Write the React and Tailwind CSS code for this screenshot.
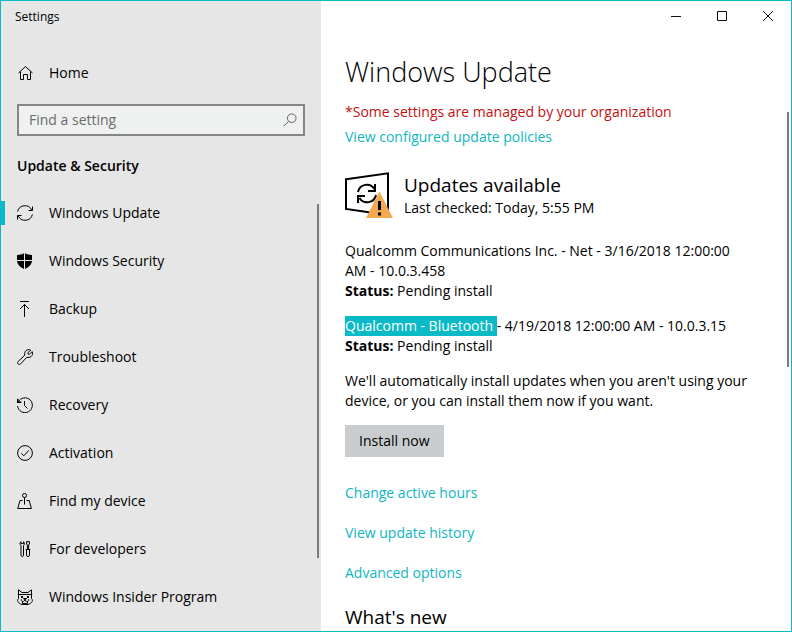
import React from "react";

function Icon({ children, className = "size-4", box = "0 0 16 16" }) {
  return (
    <svg viewBox={box} className={className} fill="none" stroke="currentColor" strokeWidth="1" aria-hidden="true">
      {children}
    </svg>
  );
}

const icons = {
  home: (
    <Icon>
      <path d="M1.5 8 8.5 1.5 15.5 8M3.5 6.5V14.5H6.5V9.5H10.5V14.5H13.5V6.5" />
    </Icon>
  ),
  sync: (
    <Icon>
      <path d="M.6 6.6A7.5 7.5 0 0 1 14.8 5.2M15.4 9.4A7.5 7.5 0 0 1 1.2 10.8" />
      <path d="M15.5 1.5V5.5H11.5M.5 14.5V10.5H4.5" />
    </Icon>
  ),
  shield: (
    <Icon>
      <path
        d="M7.5 0C5.5 1.2 3.2 1.9 0 2V7H7V.3ZM8 .3V7H15V2C12.2 1.9 9.8 1.5 8 .3ZM0 8C.4 11.6 3.4 14.4 7 16V8ZM8 16C11.6 14.4 14.6 11.6 15 8H8Z"
        fill="currentColor"
        stroke="none"
      />
    </Icon>
  ),
  backup: (
    <Icon>
      <path d="M3 .5H12M7.5 16V3.5M3 8 7.5 3.5 12 8" />
    </Icon>
  ),
  wrench: (
    <Icon>
      <path d="M13.6 1.1 10.9 3.8 11.1 5.1 12.4 5.3 15.1 2.6C16 4.6 15.4 6.6 14 7.6 12.8 8.5 11.2 8.7 9.9 8.2L3.6 14.9C2.9 15.7 1.8 15.7 1.1 15 .4 14.2.4 13.1 1.2 12.4L7.9 6.1C7.3 4.4 7.7 2.8 8.9 1.7 10.2.5 12 .3 13.6 1.1Z" />
    </Icon>
  ),
  recovery: (
    <Icon>
      <path d="M1.3 5A7.4 7.4 0 1 1 .6 9M7.5 4V8.5L10.5 11.5" />
      <path d="M.8 1.8V5.2H4.4" strokeWidth="1.5" />
    </Icon>
  ),
  activation: (
    <Icon>
      <circle cx="8" cy="8" r="7.4" />
      <path d="M4.3 8.3 6.8 10.8 11.8 5.4" />
    </Icon>
  ),
  find: (
    <Icon>
      <circle cx="7.5" cy="2.5" r="2" />
      <path d="M7.5 4.5V11.5M5.5 7.5H3L.7 15.5H14.4L12.2 7.5H9.5" />
    </Icon>
  ),
  developers: (
    <Icon>
      <path d="M4 .7C2.8 1.3 2.6 3.6 4 4.6V14.2C4 15.9 6.5 15.9 6.5 14.2V4.6C7.8 3.6 7.6 1.3 6.5.7V2.6H4ZM9.6.6H12.4V3L11.6 4V8.5H10.4V4L9.6 3ZM9.5 8.5H12.5V14.3C12.5 15.9 9.5 15.9 9.5 14.3ZM8.7 8.5H13.3" />
    </Icon>
  ),
  insider: (
    <Icon>
      <path d="M1.5 5.5V.8L5 3.5H11L14.5.8V5.5M.8 5.5H15.2M1.5 5.5V9.5M14.5 5.5V9.5" />
      <path d="M1.5 9.5C.3 10.5.3 12.4 1.5 13.3 2.6 15 4.6 15.5 6 15.5H10C11.4 15.5 13.4 15 14.5 13.3 15.7 12.4 15.7 10.5 14.5 9.5" />
      <path d="M6.5 9.5H9.5L8 11.3ZM8 11C7.6 12.3 6.6 12.6 5.6 12.4 4.4 12.1 4 11.2 4.4 10.2M8 11C8.4 12.3 9.4 12.6 10.4 12.4 11.6 12.1 12 11.2 11.6 10.2M5.5 12.5V14.5H10.5V12.5" />
      <path d="M4 7H6V9H4ZM10 7H12V9H10Z" fill="currentColor" stroke="none" />
    </Icon>
  ),
};

const navItems = [
  { icon: "sync", label: "Windows Update", current: true },
  { icon: "shield", label: "Windows Security" },
  { icon: "backup", label: "Backup" },
  { icon: "wrench", label: "Troubleshoot" },
  { icon: "recovery", label: "Recovery" },
  { icon: "activation", label: "Activation" },
  { icon: "find", label: "Find my device" },
  { icon: "developers", label: "For developers" },
  { icon: "insider", label: "Windows Insider Program" },
];

function NavLink({ icon, label, current }) {
  return (
    <a href="#" aria-current={current ? "page" : undefined} className="flex h-12 items-center">
      <span className={current ? "-ml-px h-6 w-[5px] bg-[#0bbac7]" : "-ml-px h-6 w-[5px]"} />
      <span className="ml-3 flex items-center gap-4">
        {icons[icon]}
        <span>{label}</span>
      </span>
    </a>
  );
}

function Sidebar() {
  return (
    <aside className="relative w-80 shrink-0 bg-[#e6e6e6]">
      <div className="flex h-8 items-center px-3.5 text-xs">Settings</div>
      <div className="mt-4">
        <NavLink icon="home" label="Home" />
      </div>
      <div className="mx-4 mt-[7px] flex h-8 items-center border-2 border-[#858585] bg-[#eff1f0] px-2.5 text-[#666]">
        <input
          type="text"
          aria-label="Find a setting"
          placeholder="Find a setting"
          className="min-w-0 flex-1 bg-transparent outline-none placeholder:text-[#6b6b6b]"
        />
        <Icon className="-mr-1 size-3.5" box="0 0 14 14">
          <circle cx="8.7" cy="5.2" r="4.3" />
          <path d="M5.6 8.3.6 13.3" />
        </Icon>
      </div>
      <h2 className="mt-4 h-7 px-4 leading-7 font-semibold">Update &amp; Security</h2>
      <nav className="mt-[9px]">
        {navItems.map((item) => (
          <NavLink key={item.label} {...item} />
        ))}
      </nav>
      <div className="absolute top-[203px] right-0.5 h-[354px] w-0.5 bg-[#7c7c7c]" />
    </aside>
  );
}

function WindowControls() {
  const cell = "flex h-[30px] w-[46px] items-center justify-center";
  return (
    <div className="flex h-8 justify-end text-[#111]">
      <button aria-label="Minimize" className={cell}>
        <Icon className="size-2.5" box="0 0 10 10">
          <path d="M0 5.5H10" />
        </Icon>
      </button>
      <button aria-label="Maximize" className={cell}>
        <Icon className="size-2.5" box="0 0 10 10">
          <path d="M.5.5H9.5V9.5H.5Z" />
        </Icon>
      </button>
      <button aria-label="Close" className={cell}>
        <Icon className="size-2.5" box="0 0 10 10">
          <path d="M0 0 10 10M10 0 0 10" />
        </Icon>
      </button>
    </div>
  );
}

function UpdateBadge() {
  return (
    <svg viewBox="0 0 48 48" className="size-12 shrink-0" fill="none" stroke="#000" strokeWidth="2" aria-hidden="true">
      <path d="M1 7.2 43 1.3V43L1 37Z" />
      <path d="M13 20A9 9 0 0 1 29.5 17M31 23A9 9 0 0 1 14.5 26" />
      <path d="M30 12V19H23M13 31V24H20" />
      <path d="M34.5 19.5 48 46H21Z" fill="#f2a950" stroke="none" />
      <path d="M34.5 29V38M34.5 40.5V43.5" strokeWidth="3" />
    </svg>
  );
}

const linkClass = "text-[#0fb6c1]";

function Status() {
  return (
    <>
      <strong className="font-bold">Status:</strong> Pending install
    </>
  );
}

export default function App() {
  return (
    <div className="flex min-h-screen border border-[#0bbac7] bg-white font-['Open_Sans','Noto_Sans',sans-serif] text-[14px] leading-5 text-black">
      <Sidebar />
      <main className="relative min-w-0 flex-1">
        <WindowControls />
        <div className="pt-[19px] pr-9 pl-6">
          <h1 className="text-[27px] leading-10 font-light">Windows Update</h1>
          <p className="mt-2.5 text-[#c50f0f]">*Some settings are managed by your organization</p>
          <p className="mt-[5px]">
            <a href="#" className={linkClass}>View configured update policies</a>
          </p>
          <div className="mt-[25px] flex gap-[11px]">
            <UpdateBadge />
            <div>
              <h2 className="text-[19px] leading-[26px]">Updates available</h2>
              <p>Last checked: Today, 5:55 PM</p>
            </div>
          </div>
          <p className="mt-[21px] pr-1">
            Qualcomm Communications Inc. - Net - 3/16/2018 12:00:00 AM - 10.0.3.458
            <br />
            <Status />
          </p>
          <p className="mt-[15px]">
            <mark className="inline-block h-5 bg-[#0bbac7] align-top whitespace-pre text-white">{"Qualcomm - Bluetooth "}</mark>- 4/19/2018
            12:00:00 AM - 10.0.3.15
            <br />
            <Status />
          </p>
          <p className="mt-[15px]">
            We'll automatically install updates when you aren't using your device, or you can install them now if you want.
          </p>
          <button className="mt-3.5 h-8 bg-[#c9cdcf] px-3.5">Install now</button>
          <div className="mt-[26px] flex flex-col items-start gap-5">
            <a href="#" className={linkClass}>Change active hours</a>
            <a href="#" className={linkClass}>View update history</a>
            <a href="#" className={linkClass}>Advanced options</a>
          </div>
          <h2 className="mt-[21px] text-[19px] leading-[26px]">What's new</h2>
        </div>
        <div className="absolute top-[111px] right-0.5 h-[255px] w-0.5 bg-[#7c7c7c]" />
      </main>
    </div>
  );
}
